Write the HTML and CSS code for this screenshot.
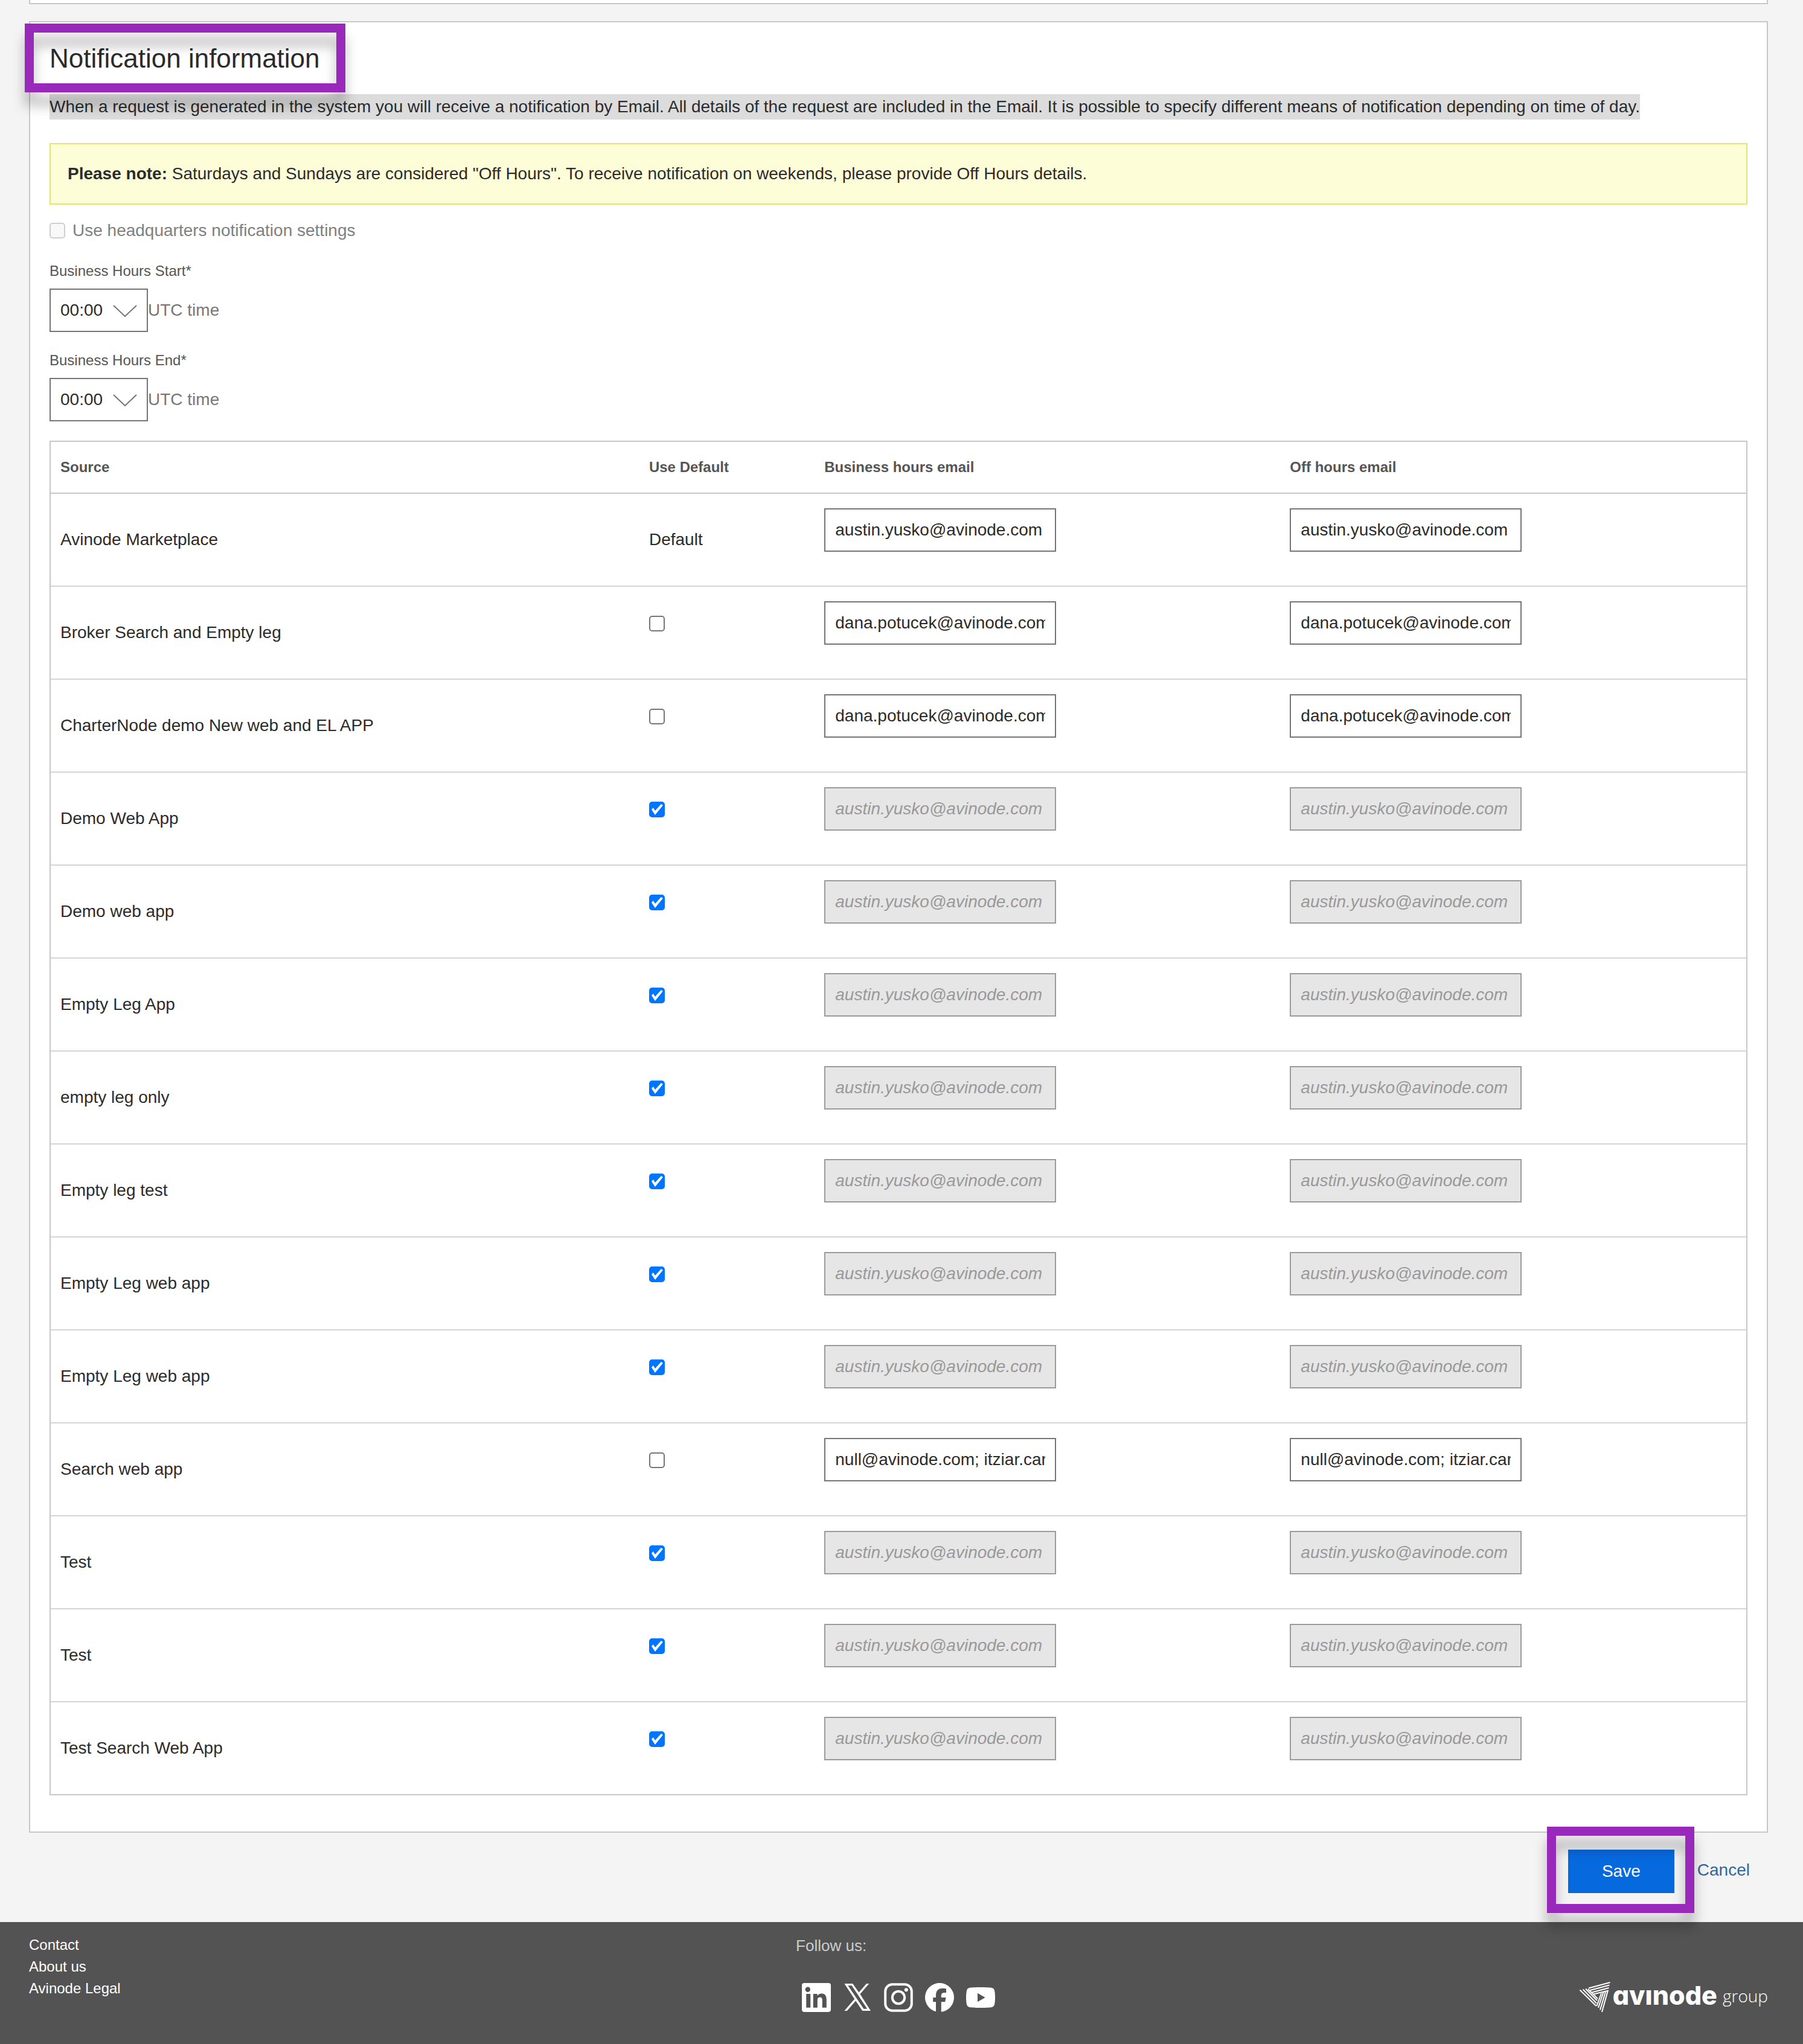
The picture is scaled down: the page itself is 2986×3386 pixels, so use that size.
FILE: index.html
```html
<!DOCTYPE html>
<html lang="en">
<head>
    <meta charset="UTF-8">
    <meta name="viewport" content="width=device-width, initial-scale=1">
    <title>Notification information</title>
    <link rel="stylesheet" href="styles.css">
</head>
<body>
<form class="page">
    <div class="card card-prev"></div>
    <div class="card">
        <h2><span class="marked mark-title">Notification information</span></h2>
        <p class="intro"><span>When a request is generated in the system you will receive a notification by Email. All details of the request are included in the Email. It is possible to specify different means of notification depending on time of day.</span></p>
        <div class="note"><b>Please note:</b> Saturdays and Sundays are considered "Off Hours". To receive notification on weekends, please provide Off Hours details.</div>

        <label class="hq"><input type="checkbox" name="hq" disabled>Use headquarters notification settings</label>

        <div class="field">
            <label for="start">Business Hours Start*</label>
            <div class="time">
                <select id="start" name="start"><option>00:00</option></select>
                <svg viewBox="0 0 40 20"><path d="M1 1l19 18L39 1"/></svg>
                <span>UTC time</span>
            </div>
        </div>
        <div class="field">
            <label for="end">Business Hours End*</label>
            <div class="time">
                <select id="end" name="end"><option>00:00</option></select>
                <svg viewBox="0 0 40 20"><path d="M1 1l19 18L39 1"/></svg>
                <span>UTC time</span>
            </div>
        </div>

        <table>
            <colgroup>
                <col class="col-source">
                <col class="col-default">
                <col class="col-email">
                <col>
            </colgroup>
            <thead>
            <tr>
                <th>Source</th>
                <th>Use Default</th>
                <th>Business hours email</th>
                <th>Off hours email</th>
            </tr>
            </thead>
            <tbody id="sources"></tbody>
        </table>
    </div>

    <div class="actions">
        <span class="marked mark-save"><button type="button">Save</button></span>
        <a href="#">Cancel</a>
    </div>
</form>

<footer>
    <div class="links">
        <a href="#">Contact</a>
        <a href="#">About us</a>
        <a href="#">Avinode Legal</a>
    </div>
    <div class="follow">
        <p>Follow us:</p>
        <div class="social">
            <a href="#" aria-label="LinkedIn"><svg viewBox="0 0 24 24"><path d="M22.2 0H1.8C.8 0 0 .8 0 1.700v20.600C0 23.200.8 24 1.800 24h20.400c1 0 1.800-.8 1.800-1.700V1.700C24 .8 23.200 0 22.200 0zM7.100 20.400H3.600V9h3.500v11.400zM5.300 7.400a2.100 2.100 0 1 1 0-4.100 2.100 2.100 0 0 1 0 4.100zm15.100 13h-3.500v-5.600c0-1.300 0-3-1.900-3s-2.100 1.400-2.100 2.900v5.700H9.400V9h3.400v1.600c.5-.9 1.600-1.900 3.400-1.900 3.600 0 4.200 2.400 4.200 5.500v6.200z"/></svg></a>
            <a href="#" aria-label="X"><svg viewBox="0 0 24 24"><path d="M1.200.5h6.900l5.100 7.200L19.500.5h2.200l-7.500 8.600 8.800 13.900h-6.900l-5.500-8.300-7.200 8.300H1.200l8.400-9.700zM4.200 2.100l13 19.300h2.900L7.300 2.100z"/></svg></a>
            <a href="#" aria-label="Instagram"><svg viewBox="0 0 24 24"><rect class="line" x="1.100" y="1.100" width="21.800" height="21.800" rx="5.800"/><circle class="line" cx="12" cy="12" r="5.100"/><circle cx="18.400" cy="5.600" r="1.500"/></svg></a>
            <a href="#" aria-label="Facebook"><svg viewBox="0 0 24 24"><path d="M24 12a12 12 0 1 0-15 11.600v-8H6.600V12H9v-1.600c0-4.100 1.900-6 5.900-6 .8 0 2.100.2 2.600.3v3.300c-.3 0-.8 0-1.400 0-2 0-2.700.7-2.700 2.700V12h3.900l-.7 3.600h-3.200v8.300A12 12 0 0 0 24 12z"/></svg></a>
            <a href="#" aria-label="YouTube"><svg viewBox="0 0 24 24"><path d="M23.500 6.200a3 3 0 0 0-2.100-2.200C19.500 3.500 12 3.500 12 3.500s-7.500 0-9.400.5A3 3 0 0 0 .5 6.200 31 31 0 0 0 0 12c0 2 .1 3.900.5 5.800a3 3 0 0 0 2.100 2.200c1.900.5 9.400.5 9.400.5s7.500 0 9.400-.5a3 3 0 0 0 2.100-2.200c.4-1.900.5-3.800.5-5.800s-.1-3.900-.5-5.800zM9.500 15.600V8.400l6.300 3.600z"/></svg></a>
        </div>
    </div>
    <div class="logo">
        <svg viewBox="0 0 51 51">
            <path d="M15 10.500L50.500 1M17.500 14L49.500 5.500M20.500 17.500L48.500 10M23 20.500L48 14.500"/>
            <path d="M.5 13.500L27.500 40M5.500 12.500L28 35.500M10 11.500L29 31M14 12l16 16"/>
            <path d="M37 50L46.500 16M34 46.500L43 16.500M31 43L39.500 17M28.500 40L36 19"/>
        </svg>
        <span class="brand">avınode</span>
        <span class="group">group</span>
    </div>
</footer>
<script>
    const austin = 'austin.yusko@avinode.com'
    const dana = 'dana.potucek@avinode.com'
    const many = 'null@avinode.com; itziar.carracedo@avinode.com'

    // name, email, use default (null = the default row itself)
    const sources = [
        ['Avinode Marketplace', austin, null],
        ['Broker Search and Empty leg', dana, false],
        ['CharterNode demo New web and EL APP', dana, false],
        ['Demo Web App', austin, true],
        ['Demo web app', austin, true],
        ['Empty Leg App', austin, true],
        ['empty leg only', austin, true],
        ['Empty leg test', austin, true],
        ['Empty Leg web app', austin, true],
        ['Empty Leg web app', austin, true],
        ['Search web app', many, false],
        ['Test', austin, true],
        ['Test', austin, true],
        ['Test Search Web App', austin, true]
    ]

    document.getElementById('sources').innerHTML = sources.map(([name, email, def], i) => {
        const check = def === null ? 'Default'
            : `<input type="checkbox" name="default${i}" aria-label="Use default for ${name}" ${def ? 'checked' : ''}>`
        const off = def ? 'disabled' : ''
        return `<tr>
            <td>${name}</td>
            <td>${check}</td>
            <td><input type="text" name="business${i}" aria-label="Business hours email for ${name}" value="${email}" ${off}></td>
            <td><input type="text" name="off${i}" aria-label="Off hours email for ${name}" value="${email}" ${off}></td>
        </tr>`
    }).join('')
</script>
</body>
</html>
```

FILE: styles.css
```css
* {
    margin: 0;
    padding: 0;
    box-sizing: border-box;
}

body {
    background-color: #f4f4f4;
    font-family: "Liberation Sans", Arial, sans-serif;
    font-size: 28px;
    line-height: 42px;
    color: #2b2b2b;
    min-height: 100vh;
    display: flex;
    flex-direction: column;
}

.page {
    padding: 0 58px 0 48px;
}

.card {
    background-color: #fff;
    border: 2px solid #c8c8c8;
    padding: 32px 32px 60px;
}

.card-prev {
    height: 7px;
    border-top: none;
    padding: 0;
    margin-bottom: 28px;
}

h2 {
    font-size: 44px;
    font-weight: normal;
    line-height: 56px;
    margin-bottom: 31px;
}

.intro {
    margin-bottom: 39px;
}

.intro span {
    background-color: #dcdcdc;
    display: inline-block;
}

.note {
    background-color: #fdfdd7;
    border: 2px solid #e4e56c;
    padding: 28px;
    margin-bottom: 22px;
}

/* purple frames drawn over the page */
.marked {
    position: relative;
    display: inline-block;
}

.marked::after {
    content: "";
    position: absolute;
    z-index: 1;
    border: 15px solid #9829bb;
    filter: drop-shadow(0 22px 10px rgba(0, 0, 0, .26));
    pointer-events: none;
}

.mark-title::after {
    inset: -30px -42px -28px -41px;
}

.mark-save::after {
    inset: -38px -33px -33px -35px;
}

.hq {
    display: flex;
    align-items: center;
    gap: 12px;
    color: #808080;
    margin-bottom: 28px;
}

.field {
    margin-bottom: 29px;
}

.field label {
    display: block;
    font-size: 24px;
    line-height: 36px;
    color: #555;
    margin-bottom: 11px;
}

.time {
    position: relative;
    display: flex;
    align-items: center;
    color: #777;
}

.time select {
    width: 163px;
    height: 72px;
    border: 2px solid #757575;
    border-radius: 0;
    background-color: #fff;
    appearance: none;
    padding: 0 16px;
    font: inherit;
    color: #2b2b2b;
}

.time svg {
    position: absolute;
    left: 105px;
    top: 27px;
    width: 40px;
    height: 20px;
    fill: none;
    stroke: #757575;
    stroke-width: 2;
    pointer-events: none;
}

table {
    width: 100%;
    table-layout: fixed;
    border: 2px solid #c8c8c8;
    border-spacing: 0;
    margin-top: 32px;
}

.col-source {
    width: 34.72%;
}

.col-default {
    width: 10.34%;
}

.col-email {
    width: 27.46%;
}

th {
    height: 86px;
    padding: 0 16px;
    border-bottom: 2px solid #c8c8c8;
    font-size: 24px;
    text-align: left;
    color: #555;
}

td {
    height: 154px;
    padding: 0 16px;
    border-bottom: 2px solid #d5d5d5;
}

tr:last-child td {
    height: 152px;
    border-bottom: none;
}

input[type=text] {
    display: block;
    width: 384px;
    height: 72px;
    border: 2px solid #757575;
    background-color: #fff;
    padding: 0 16px;
    margin-bottom: 32px;
    font: inherit;
    color: #2b2b2b;
}

input[type=text]:disabled {
    border-color: #9b9b9b;
    background-color: #e6e6e6;
    color: #999;
    font-style: italic;
}

input[type=checkbox] {
    appearance: none;
    display: block;
    position: relative;
    width: 26px;
    height: 26px;
    border: 2px solid #767676;
    border-radius: 5px;
    background-color: #fff;
}

td input[type=checkbox] {
    margin-bottom: 30px;
}

input[type=checkbox]:disabled {
    border-color: #cfcfcf;
    background-color: #f8f8f8;
}

input[type=checkbox]:checked {
    border-color: #0075ff;
    background-color: #0075ff;
}

input[type=checkbox]:checked::after {
    content: "";
    position: absolute;
    inset: -2px;
    background-color: #fff;
    clip-path: polygon(4px 13px, 7px 10px, 10px 15px, 20px 4px, 23px 6px, 10px 22px);
}

.actions {
    display: flex;
    justify-content: flex-end;
    align-items: center;
    gap: 38px;
    padding: 28px 30px 48px 0;
}

button {
    display: block;
    width: 176px;
    height: 72px;
    border: none;
    background-color: #0769de;
    font: inherit;
    color: #fff;
}

.actions a {
    color: #336699;
    text-decoration: none;
    padding-bottom: 5px;
}

footer {
    flex: 1;
    display: grid;
    grid-template-columns: 44.1% 1fr auto;
    background-color: #535353;
    padding: 20px 58px 48px 48px;
}

footer a {
    display: block;
    color: #fff;
    text-decoration: none;
}

.links {
    font-size: 24px;
    line-height: 36px;
}

.follow {
    font-size: 26px;
    line-height: 38px;
    color: #ccc;
}

.social {
    display: flex;
    gap: 20px;
    margin: 43px 0 0 10px;
}

.social svg {
    display: block;
    width: 48px;
    height: 48px;
    fill: #fff;
}

.social .line {
    fill: none;
    stroke: #fff;
    stroke-width: 2;
}

.logo {
    display: flex;
    align-items: center;
    align-self: start;
    margin-top: 79px;
    line-height: 1;
    color: #fff;
}

.logo svg {
    width: 51px;
    height: 51px;
    fill: none;
    stroke: #fff;
    stroke-width: 2;
    margin-right: 4px;
}

.logo span {
    padding-bottom: 6px;
}

.brand {
    font-family: Inter, sans-serif;
    font-size: 43px;
    font-weight: 800;
    font-feature-settings: "cv11";
    margin-right: 9px;
}

.group {
    font-family: "Open Sans", sans-serif;
    font-size: 28px;
    font-weight: 300;
}
```
